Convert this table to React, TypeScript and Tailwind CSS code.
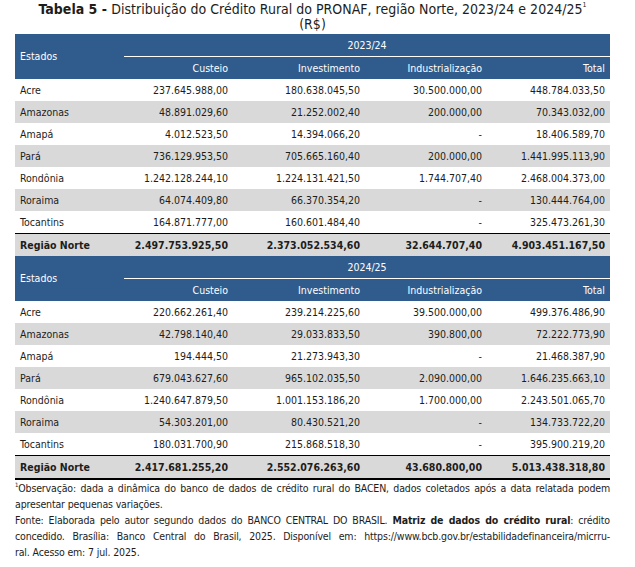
import React from "react";

type Row = [string, string, string, string, string];

const t1: Row[] = [
  ["Acre", "237.645.988,00", "180.638.045,50", "30.500.000,00", "448.784.033,50"],
  ["Amazonas", "48.891.029,60", "21.252.002,40", "200.000,00", "70.343.032,00"],
  ["Amapá", "4.012.523,50", "14.394.066,20", "-", "18.406.589,70"],
  ["Pará", "736.129.953,50", "705.665.160,40", "200.000,00", "1.441.995.113,90"],
  ["Rondônia", "1.242.128.244,10", "1.224.131.421,50", "1.744.707,40", "2.468.004.373,00"],
  ["Roraima", "64.074.409,80", "66.370.354,20", "-", "130.444.764,00"],
  ["Tocantins", "164.871.777,00", "160.601.484,40", "-", "325.473.261,30"],
];
const tot1: Row = ["Região Norte", "2.497.753.925,50", "2.373.052.534,60", "32.644.707,40", "4.903.451.167,50"];

const t2: Row[] = [
  ["Acre", "220.662.261,40", "239.214.225,60", "39.500.000,00", "499.376.486,90"],
  ["Amazonas", "42.798.140,40", "29.033.833,50", "390.800,00", "72.222.773,90"],
  ["Amapá", "194.444,50", "21.273.943,30", "-", "21.468.387,90"],
  ["Pará", "679.043.627,60", "965.102.035,50", "2.090.000,00", "1.646.235.663,10"],
  ["Rondônia", "1.240.647.879,50", "1.001.153.186,20", "1.700.000,00", "2.243.501.065,70"],
  ["Roraima", "54.303.201,00", "80.430.521,20", "-", "134.733.722,20"],
  ["Tocantins", "180.031.700,90", "215.868.518,30", "-", "395.900.219,20"],
];
const tot2: Row = ["Região Norte", "2.417.681.255,20", "2.552.076.263,60", "43.680.800,00", "5.013.438.318,80"];

const cols = "grid grid-cols-[109px_109px_132px_122px_123px]";

function Block({ year, rows, total, last }: { year: string; rows: Row[]; total: Row; last?: boolean }) {
  return (
    <div>
      <div className="grid grid-cols-[109px_486px] bg-[#305c8d] text-white">
        <div className="flex items-center pl-[5px] h-[45px]">Estados</div>
        <div className="flex flex-col">
          <div className="h-[22px] flex items-center justify-center">{year}</div>
          <div className="h-px bg-white" />
          <div className="grid grid-cols-[109px_132px_122px_123px] h-[22px] items-center">
            <div className="text-right pr-[5px]">Custeio</div>
            <div className="text-right pr-[5px]">Investimento</div>
            <div className="text-right pr-[5px]">Industrialização</div>
            <div className="text-right pr-[5px]">Total</div>
          </div>
        </div>
      </div>
      {rows.map((r, i) => (
        <div key={r[0]} className={`${cols} h-[22px] items-center ${i % 2 === 1 ? "bg-[#d9d9d9]" : "bg-white"}`}>
          <div className="pl-[5px]">{r[0]}</div>
          <div className="text-right pr-[5px]">{r[1]}</div>
          <div className="text-right pr-[5px]">{r[2]}</div>
          <div className="text-right pr-[5px]">{r[3]}</div>
          <div className="text-right pr-[5px]">{r[4]}</div>
        </div>
      ))}
      <div className={`${cols} items-center bg-[#d9d9d9] font-bold border-t border-black ${last ? "h-[25px] border-b-2" : "h-[23px]"}`}>
        <div className="pl-[5px]">{total[0]}</div>
        <div className="text-right pr-[5px]">{total[1]}</div>
        <div className="text-right pr-[5px]">{total[2]}</div>
        <div className="text-right pr-[5px]">{total[3]}</div>
        <div className="text-right pr-[5px]">{total[4]}</div>
      </div>
    </div>
  );
}

export default function App() {
  return (
    <div className="w-[635px] h-[567px] bg-white text-[#1d1d1b] font-['DejaVu_Sans_Condensed','DejaVu_Sans',sans-serif] [font-stretch:condensed]">
      <div className="pl-[15px] w-[610px]">
        <div className="pt-[2px] text-center text-[14px] leading-[15px]">
          <div>
            <span className="font-bold">Tabela 5 - </span>
            Distribuição do Crédito Rural do PRONAF, região Norte, 2023/24 e 2024/25
            <span className="inline-block text-[7px] leading-[7px] align-top">1</span>
          </div>
          <div>(R$)</div>
        </div>
        <div className="mt-[2px] text-[10.5px] leading-[13px]">
          <Block year="2023/24" rows={t1} total={tot1} />
          <Block year="2024/25" rows={t2} total={tot2} last />
        </div>
        <div className="text-[10.5px] leading-[16px] text-justify tracking-[-0.15px]">
          <div className="whitespace-nowrap [text-align-last:justify]">
            <span className="inline-block text-[6px] leading-[6px] align-top mt-[2px]">1</span>Observação: dada a dinâmica do banco de dados de crédito rural do BACEN, dados coletados após a data relatada podem
          </div>
          <div>apresentar pequenas variações.</div>
          <div className="whitespace-nowrap [text-align-last:justify]">
            Fonte: Elaborada pelo autor segundo dados do BANCO CENTRAL DO BRASIL. <span className="font-bold">Matriz de dados do crédito rural</span>: crédito
          </div>
          <div className="whitespace-nowrap [text-align-last:justify]">
            concedido. Brasília: Banco Central do Brasil, 2025. Disponível em: https://www.bcb.gov.br/estabilidadefinanceira/micrru-
          </div>
          <div>ral. Acesso em: 7 jul. 2025.</div>
        </div>
      </div>
    </div>
  );
}
